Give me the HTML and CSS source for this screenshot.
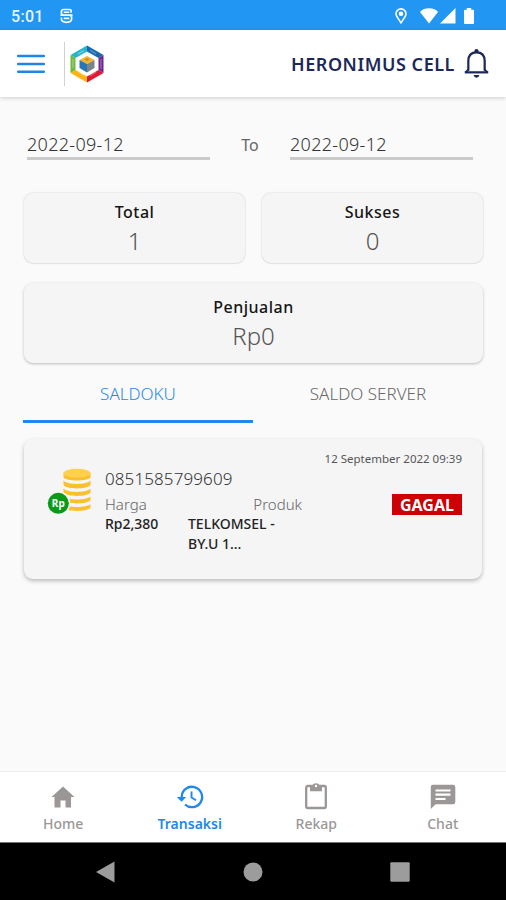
FILE: index.html
```html
<!DOCTYPE html>
<html lang="id">
<head>
<meta charset="utf-8">
<title>Transaksi</title>
<link rel="stylesheet" href="styles.css">
</head>
<body>
<div class="screen">
  <div class="status">
    <span class="clock">5:01</span>
    <svg class="carrier" viewBox="0 0 14 16" fill="none" stroke="#fff" stroke-width="1.8"><path d="M12 4.5V3Q12 1 10 1H4Q1.500 1 1.500 3.500V5Q1.500 7 4 7H10Q12.500 7 12.500 9.500V11Q12.500 14.800 7 14.800Q1.500 14.800 1.500 11V9.500M.5 7H13.500M4 4H10M4 10.500H10"/></svg>
    <span class="grow"></span>
    <svg class="pin" viewBox="0 0 12 16" fill="none" stroke="#fff" stroke-width="1.600"><path d="M6 14.800C4 11.500 1 8.500 1 5.800A5 4.900 0 0 1 11 5.800C11 8.500 8 11.500 6 14.800Z"/><circle cx="6" cy="5.800" r="1.500" fill="#fff"/></svg>
    <svg class="wifi" viewBox="0 0 18 16" fill="#fff"><path d="M0 4Q2.500.2 9 .2T18 4L9 15.500Z"/></svg>
    <svg class="signal" viewBox="0 0 16 16" fill="#fff"><path d="M0 15.500L15.500 0V15.500Z"/></svg>
    <svg class="battery" viewBox="0 0 10 16" fill="#fff"><path d="M0 2.500Q0 1.800 1 1.800H2.800V0H7.200V1.800H9Q10 1.800 10 2.500V15Q10 16 9 16H1Q0 16 0 15Z"/></svg>
  </div>
  <header class="header">
    <svg class="menu" viewBox="0 0 28 20" stroke="#1e86e8" stroke-width="2.500" stroke-linecap="round"><path d="M1.200 2H26.800M1.200 10H26.800M1.200 17.800H26.800"/></svg>
    <span class="divider"></span>
    <svg class="logo" viewBox="0 0 34 38">
      <path d="M17 .5L.5 10L5.500 13L17 6.500Z" fill="#27b4cd"/>
      <path d="M17 .5L33.500 10L28.500 13L17 6.500Z" fill="#1769b0"/>
      <path d="M33.500 10V28L28.500 25V13Z" fill="#70268c"/>
      <path d="M33.500 28L17 37.500V31.500L28.500 25Z" fill="#df1935"/>
      <path d="M17 37.500L.5 28L5.500 25L17 31.500Z" fill="#fcb415"/>
      <path d="M.5 28V10L5.500 13V25Z" fill="#70b83b"/>
      <path d="M8 9L14 5.500M20 5L26 9M31 14V24M26 27L20 31M9 27L14 30M3 14V23" stroke="#fff" stroke-opacity=".28" stroke-width="1.500"/>
      <path d="M17 11L24.500 15L17 19L9.500 15Z" fill="#f4b32b"/>
      <path d="M9.500 15L17 19V27.500L9.500 23Z" fill="#2577b8"/>
      <path d="M24.500 15L17 19V27.500L24.500 23Z" fill="#7c8489"/>
      <path d="M14.500 14.500L17 13L19.500 14.500L17 16Z" fill="#d18a23"/>
    </svg>
    <span class="grow"></span>
    <span class="shop">HERONIMUS CELL</span>
    <svg class="bell" viewBox="0 0 26 32" fill="none" stroke="#1c2858"><path stroke-width="2.300" d="M4.500 23.500V13.500Q4.500 4.500 13 4.500T21.500 13.500V23.500"/><path stroke-width="2" d="M1.500 25.300L4.500 22.300M24.500 25.300L21.500 22.300"/><path stroke-width="2.300" d="M.8 25.200H25.200"/><path d="M10.800 4.500V3A2.200 2 0 0 1 15.200 3V4.500ZM10 28H16Q15.500 30.700 13 30.700T10 28Z" fill="#1c2858" stroke="none"/></svg>
  </header>
  <main class="main">
    <div class="dates">
      <div class="date">2022-09-12</div>
      <div class="to">To</div>
      <div class="date">2022-09-12</div>
    </div>
    <div class="stats">
      <div class="stat"><div class="label">Total</div><div class="value">1</div></div>
      <div class="stat"><div class="label">Sukses</div><div class="value">0</div></div>
      <div class="stat wide"><div class="label">Penjualan</div><div class="value">Rp0</div></div>
    </div>
    <div class="tabs">
      <div class="tab active"><span>SALDOKU</span></div>
      <div class="tab"><span class="server">SALDO SERVER</span></div>
    </div>
    <article class="trx">
      <svg class="coins" viewBox="0 0 44 46">
        <g fill="#fbc02d">
          <path d="M15.500 36V39.500C18 44 40 44 42.500 39.500V36C39 40 19 40 15.500 36Z"/>
          <path d="M15.500 28.500V32C18 36.500 40 36.500 42.500 32V28.500C39 32.500 19 32.500 15.500 28.500Z"/>
          <path d="M15.500 20.500V24.500C18 29 40 29 42.500 24.500V20.500C39 25 19 25 15.500 20.500Z"/>
          <path d="M15.500 12.500V17C18 21.500 40 21.500 42.500 17V12.500C39 17 19 17 15.500 12.500Z"/>
          <path d="M15.500 5V9.500C18 13.500 40 13.500 42.500 9.500V5Z"/>
        </g>
        <ellipse cx="29" cy="5.200" rx="13.500" ry="4.400" fill="#ffd04b"/>
        <circle cx="10.300" cy="35.300" r="12" fill="#f4f4f4"/>
        <circle cx="10.300" cy="35.300" r="10.500" fill="#0b9a18"/>
        <text class="rp" x="10.300" y="39" text-anchor="middle">Rp</text>
      </svg>
      <div class="info">
        <div class="number">0851585799609</div>
        <div class="cols">
          <div class="price"><div class="key">Harga</div><div class="val">Rp2,380</div></div>
          <div class="product"><div class="key">Produk</div><div class="val">TELKOMSEL - BY.U 1...</div></div>
        </div>
      </div>
      <div class="side">
        <div class="time">12 September 2022 09:39</div>
        <div class="badge">GAGAL</div>
      </div>
    </article>
  </main>
  <nav class="nav">
    <div class="item"><svg viewBox="0 0 28 28" fill="#9b9796"><path d="M14 3.500L25.500 14H22V24.500H16.500V17.500H11.500V24.500H5.500V14H2.500Z"/></svg><span class="home">Home</span></div>
    <div class="item on"><svg viewBox="0 0 28 28" fill="none" stroke="#1e88ee" stroke-width="2.300"><path d="M5.700 14A10.200 10.200 0 1 1 9 21.500"/><path d="M15.500 8.500V14.500L20 17.300" stroke-width="1.900"/><path d="M.8 14H10.200L5.500 18.800Z" fill="#1e88ee" stroke="none"/></svg><span class="transaksi">Transaksi</span></div>
    <div class="item"><svg viewBox="0 0 28 28" fill="none" stroke="#9b9796" stroke-width="2.300"><rect x="4.200" y="3" width="19.600" height="22" rx="1.500"/><path d="M8 2.500H10.300A3.900 3.400 0 0 1 17.700 2.500H20V8.200H8Z" fill="#9b9796" stroke="none"/><circle cx="14" cy="3" r="1.200" fill="#fff" stroke="none"/></svg><span class="rekap">Rekap</span></div>
    <div class="item"><svg viewBox="0 0 28 28"><path d="M4 1.800H24Q26.300 1.800 26.300 4V19Q26.300 21.200 24 21.200H6.500L1.800 26V4Q1.800 1.800 4 1.800Z" fill="#9b9796"/><path d="M6.500 7.500H21.500M6.500 11.700H21.500M6.500 16H16.500" stroke="#fff" stroke-width="2.200"/></svg><span class="chat">Chat</span></div>
  </nav>
  <div class="system">
    <svg viewBox="0 0 20 22" fill="#9c9c9c"><path d="M0 11L18.500 .5V21.500Z"/></svg>
    <svg viewBox="0 0 20 22" fill="#9c9c9c"><circle cx="10" cy="11" r="9.500"/></svg>
    <svg viewBox="0 0 20 22" fill="#9c9c9c"><rect x=".3" y="1.300" width="19.400" height="19.400" rx="1"/></svg>
  </div>
</div>
</body>
</html>
```
FILE: styles.css
```css
* { box-sizing: border-box; }
body { margin: 0; font-family: "Noto Sans", "Open Sans", sans-serif; background: #fafafa; }
svg { display: block; flex: none; overflow: visible; }
.screen { width: 506px; height: 900px; display: flex; flex-direction: column; overflow: hidden; }
.grow { flex: 1; }
.status { height: 30px; flex: none; background: #2196f3; display: flex; align-items: center; padding: 1px 32px 0 11px; }
.clock { font: 500 16px/20px Roboto, sans-serif; color: #e8f4ff; width: 49px; letter-spacing: .3px; padding-top: 2px; }
.carrier { width: 13px; height: 16px; }
.pin { width: 12px; height: 16px; margin-right: 13px; }
.wifi { width: 18px; height: 16px; margin-right: 2px; }
.signal { width: 16px; height: 16px; margin-right: 8px; }
.battery { width: 10px; height: 16px; }
.header { height: 67px; flex: none; background: #fff; display: flex; align-items: center; padding: 0 17px; box-shadow: 0 1px 4px rgba(0,0,0,.18); }
.menu { width: 28px; height: 20px; }
.divider { width: 1px; height: 44px; background: #d2d2d2; margin: 0 5px 0 19px; }
.logo { width: 34px; height: 38px; }
.shop { font-size: 18px; font-weight: 600; color: #1c2858; line-height: 24px; letter-spacing: .55px; margin-right: 9px; }
.bell { width: 25px; height: 31px; }
.main { flex: 1; padding: 34px 23px 0; }
.dates { display: grid; grid-template-columns: 183px 80px 183px; padding-left: 4px; }
.date { height: 29px; border-bottom: 3px solid #cacaca; font-size: 18px; font-weight: 300; line-height: 26px; color: #333; letter-spacing: .3px; }
.to { text-align: center; font-size: 16px; line-height: 29px; color: #666; }
.stats { display: grid; grid-template-columns: 221px 221px; gap: 20px 17px; margin: 33px 1px 0; }
.stat { height: 70px; background: #f5f5f5; border-radius: 9px; box-shadow: 0 0 2px rgba(0,0,0,.2), 0 1px 1px rgba(0,0,0,.05); text-align: center; padding-top: 8px; }
.wide { grid-column: 1 / 3; height: 80px; padding-top: 13px; box-shadow: 0 1px 3px rgba(0,0,0,.25); }
.label { font-size: 16px; font-weight: 500; line-height: 23px; color: #151515; letter-spacing: .5px; }
.value { font-size: 24px; font-weight: 300; line-height: 33px; color: #555; }
.tabs { display: flex; height: 59px; margin-top: 1px; }
.tab { width: 230px; text-align: center; font-size: 17px; font-weight: 300; line-height: 59px; color: #686868; }
.active { color: #1e88ee; border-bottom: 3px solid #1e88ee; }
.trx { display: flex; height: 140px; margin: 16px 1px 0; background: #f5f5f5; border-radius: 9px; box-shadow: 0 2px 4px rgba(0,0,0,.26); padding: 0 20px 0 24px; }
.coins { width: 44px; height: 46px; margin-top: 29px; }
.rp { font: 700 10px "Noto Sans", sans-serif; fill: #fff; }
.info { width: 205px; margin-left: 13px; padding-top: 28px; }
.number { font-size: 17px; font-weight: 300; line-height: 24px; color: #333; letter-spacing: .1px; }
.cols { display: flex; margin-top: 3px; }
.price { width: 83px; }
.product { width: 114px; }
.key { font-size: 15px; font-weight: 300; line-height: 20px; color: #666; }
.product .key { text-align: right; }
.val { font-size: 14px; font-weight: 500; line-height: 20px; color: #222; }
.side { flex: 1; display: flex; flex-direction: column; align-items: flex-end; white-space: nowrap; min-width: 0; }
.time { font-size: 11.500px; line-height: 18px; color: #555; margin-top: 11px; }
.badge { width: 70px; height: 21px; margin-top: 26px; background: #cc0005; color: #fff; font-size: 16px; font-weight: 700; line-height: 22px; text-align: center; }
.nav { height: 71px; flex: none; display: flex; background: #fff; border-top: 1px solid #eee; }
.item { flex: 1; display: flex; flex-direction: column; align-items: center; padding-top: 11px; font-size: 14px; font-weight: 500; line-height: 20px; color: #9b9796; }
.item svg { width: 28px; height: 28px; margin-bottom: 3px; }
.on { color: #1e88ee; font-weight: 600; }
.system { height: 58px; flex: none; background: #000; display: flex; justify-content: center; gap: 127px; padding-top: 18px; border-top: 1px solid #777; }
.system svg { width: 20px; height: 22px; }
```
